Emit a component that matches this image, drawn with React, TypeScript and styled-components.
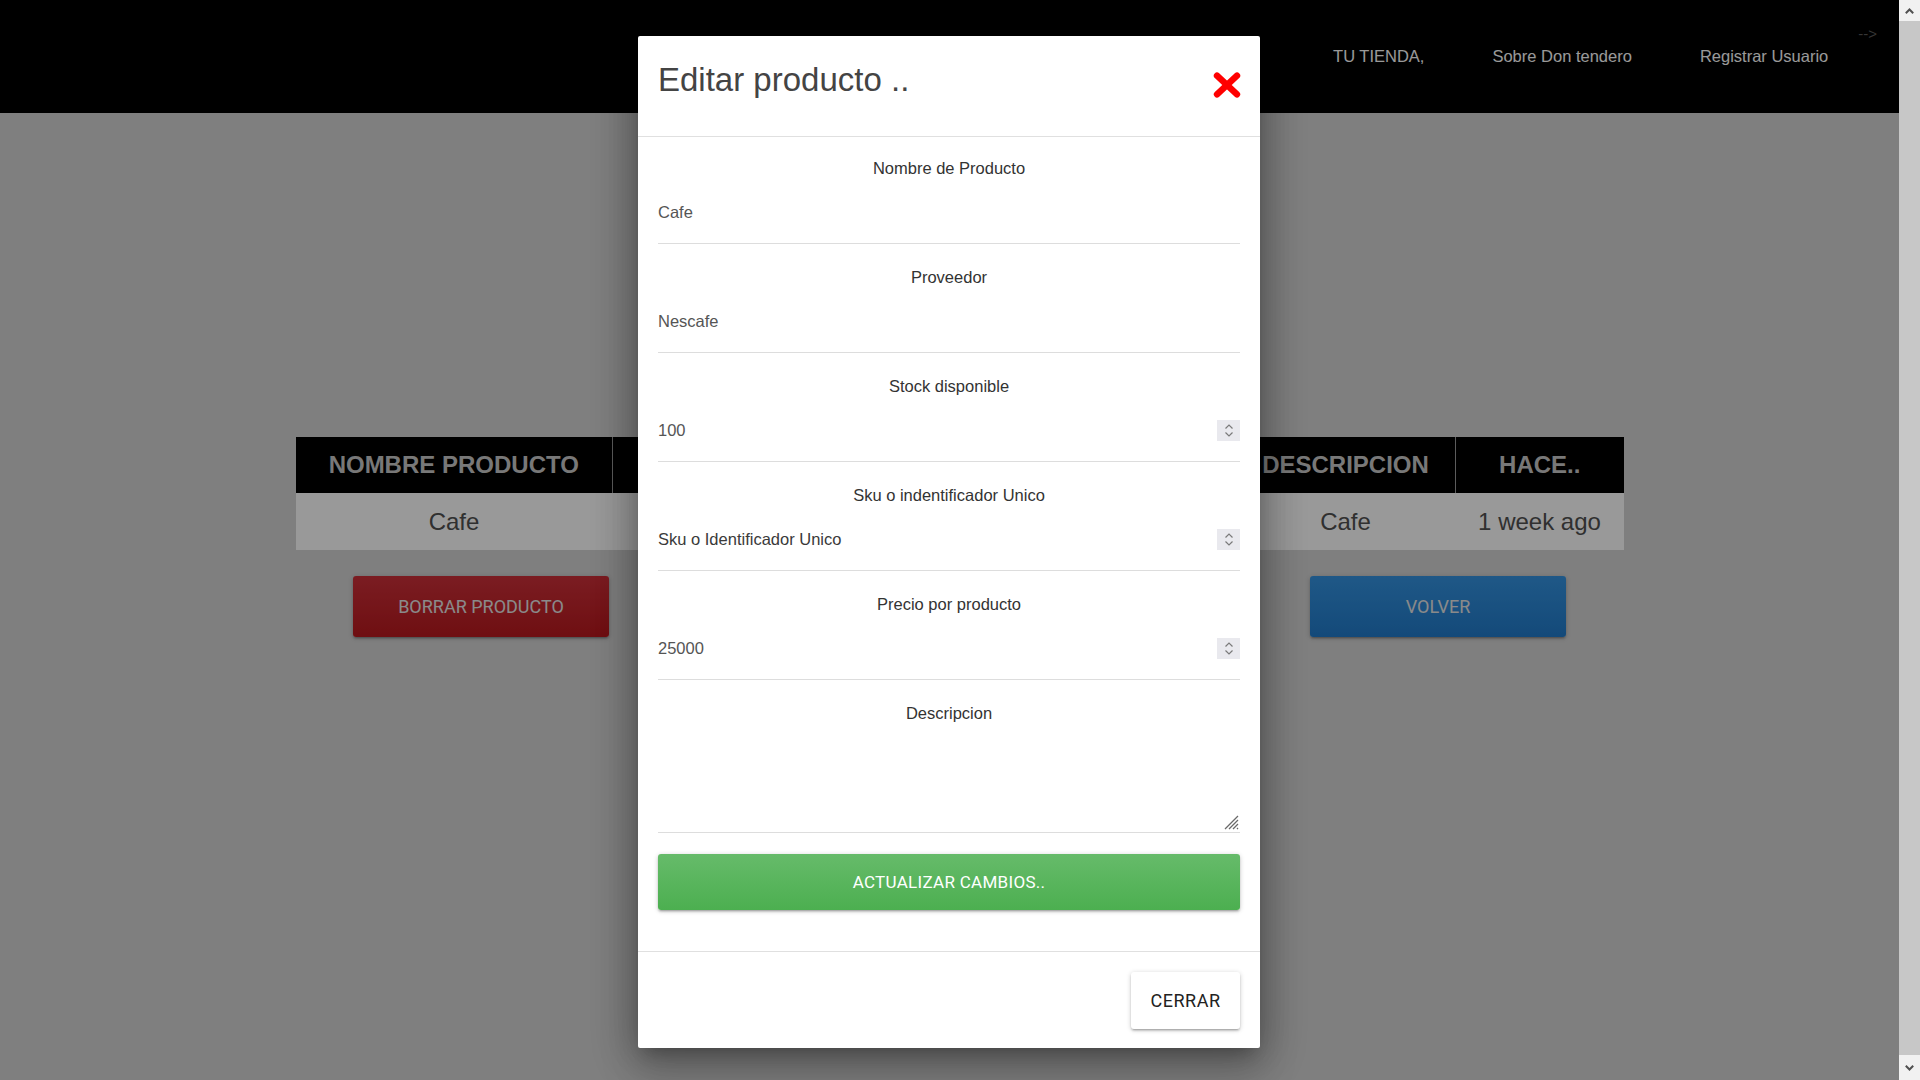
import React from "react";
import styled, { createGlobalStyle } from "styled-components";

const GlobalStyle = createGlobalStyle`
  html, body {
    margin: 0;
    padding: 0;
    height: 100%;
    overflow: hidden;
  }
  body {
    font-family: "Liberation Sans", Arial, sans-serif;
    background: #d4d4d4;
  }
  * { box-sizing: border-box; }
`;

const Screen = styled.div`
  display: flex;
  width: 100vw;
  height: 100vh;
  overflow: hidden;
`;

const Viewport = styled.div`
  position: relative;
  flex: 1;
  min-width: 0;
  height: 100%;
  overflow: hidden;
  background: #d4d4d4;
`;

/* ---------- top navigation ---------- */
const NavBar = styled.nav`
  height: 113px;
  background: #000;
  display: flex;
  justify-content: flex-end;
  align-items: center;
  padding-right: 22px;
  padding-bottom: 2px;
`;

const NavLink = styled.a`
  color: #ffffff;
  font-size: 16.5px;
  line-height: 20px;
  text-decoration: none;
  margin-left: 68px;
  &:first-child { margin-left: 0; }
`;

const StrayText = styled.span`
  align-self: flex-start;
  margin-top: 25px;
  margin-left: 30px;
  font-size: 15px;
  color: #5a5a5a;
`;

/* ---------- page content ---------- */
const Main = styled.main`
  padding: 324px 0 0 296px;
`;

const Table = styled.table`
  width: 1328px;
  border-collapse: collapse;
  table-layout: fixed;
`;

const HeadCell = styled.th<{ $last?: boolean }>`
  height: 56px;
  padding: 0;
  background: #000;
  color: #c8c8c8;
  font-size: 24px;
  font-weight: bold;
  text-align: center;
  vertical-align: middle;
  white-space: nowrap;
  overflow: hidden;
  border-right: ${(p) => (p.$last ? "none" : "1px solid #9a9a9a")};
`;

const BodyCell = styled.td`
  height: 57px;
  padding: 0;
  background: #ffffff;
  color: #505050;
  font-size: 24px;
  text-align: center;
  vertical-align: middle;
  white-space: nowrap;
  overflow: hidden;
`;

const ActionsRow = styled.div`
  width: 1328px;
  margin-top: 26px;
  padding: 0 58px 0 57px;
  display: flex;
  justify-content: space-between;
`;

const ActionButton = styled.button<{ $tone: "danger" | "info" }>`
  width: 256px;
  height: 61px;
  border: none;
  border-radius: 3px;
  font-family: Roboto, "Liberation Sans", sans-serif;
  font-size: 18px;
  text-transform: uppercase;
  color: #e6e6e6;
  background: ${(p) =>
    p.$tone === "danger"
      ? "linear-gradient(#cd3039, #b9191e)"
      : "linear-gradient(#3493e1, #217bcb)"};
  box-shadow: 0 2px 2px 0 rgba(0, 0, 0, 0.14), 0 3px 1px -2px rgba(0, 0, 0, 0.12),
    0 1px 5px 0 rgba(0, 0, 0, 0.2);
`;

/* ---------- modal ---------- */
const Overlay = styled.div`
  position: absolute;
  inset: 0;
  background: rgba(0, 0, 0, 0.4);
`;

const Modal = styled.div`
  position: absolute;
  top: 36px;
  left: 638px;
  width: 622px;
  background: #ffffff;
  border-radius: 2px;
  box-shadow: 0 24px 38px 3px rgba(0, 0, 0, 0.14), 0 9px 46px 8px rgba(0, 0, 0, 0.12),
    0 11px 15px -7px rgba(0, 0, 0, 0.2), 0 0 40px 4px rgba(0, 0, 0, 0.18);
`;

const ModalHeader = styled.div`
  height: 101px;
  padding: 24px 19px 0 20px;
  border-bottom: 1px solid #e0e0e0;
  display: flex;
  justify-content: space-between;
  align-items: flex-start;
`;

const ModalTitle = styled.h4`
  margin: 0;
  font-family: "Liberation Sans", Arial, sans-serif;
  font-weight: normal;
  font-size: 33px;
  line-height: 40px;
  color: #444444;
`;

const CloseIcon = styled.button`
  margin-top: 12px;
  padding: 0;
  border: none;
  background: transparent;
  width: 28px;
  height: 26px;
  display: flex;
  cursor: pointer;
`;

const ModalBody = styled.div`
  padding: 21px 20px 41px;
`;

const Field = styled.div<{ $last?: boolean }>`
  margin-bottom: ${(p) => (p.$last ? "0" : "23px")};
`;

const FieldLabel = styled.label`
  display: block;
  text-align: center;
  font-size: 16.5px;
  line-height: 20px;
  color: #333333;
`;

const InputRow = styled.div`
  margin-top: 4px;
  height: 62px;
  border-bottom: 1px solid #dddddd;
  display: flex;
  align-items: center;
`;

const TextInput = styled.input`
  flex: 1;
  min-width: 0;
  height: 100%;
  border: none;
  outline: none;
  padding: 0;
  background: transparent;
  font-family: "Liberation Sans", Arial, sans-serif;
  font-size: 16.5px;
  color: #555555;
  &::placeholder { color: #3a3a3a; opacity: 1; }
`;

const Spinner = styled.span`
  width: 23px;
  height: 21px;
  background: #e9e9ee;
  display: flex;
  align-items: center;
  justify-content: center;
`;

const TextAreaWrap = styled.div`
  position: relative;
  margin-top: 4px;
`;

const TextArea = styled.textarea`
  display: block;
  width: 100%;
  height: 106px;
  padding: 0;
  border: none;
  border-bottom: 1px solid #dddddd;
  outline: none;
  resize: none;
  font-family: "Liberation Sans", Arial, sans-serif;
  font-size: 16.5px;
  color: #555555;
  background: transparent;
`;

const ResizeGrip = styled.svg`
  position: absolute;
  right: 1px;
  bottom: 3px;
  pointer-events: none;
`;

const SubmitButton = styled.button`
  display: block;
  width: 100%;
  height: 56px;
  margin-top: 21px;
  border: none;
  border-radius: 3px;
  background: linear-gradient(#66bb6a, #4caf50);
  color: #ffffff;
  font-family: Roboto, "Liberation Sans", sans-serif;
  font-size: 17px;
  letter-spacing: 0.3px;
  text-transform: uppercase;
  box-shadow: 0 2px 2px 0 rgba(0, 0, 0, 0.14), 0 3px 1px -2px rgba(0, 0, 0, 0.12),
    0 1px 5px 0 rgba(0, 0, 0, 0.2);
`;

const ModalFooter = styled.div`
  border-top: 1px solid #e0e0e0;
  padding: 20px 20px 19px;
  display: flex;
  justify-content: flex-end;
`;

const FooterButton = styled.button`
  width: 109px;
  height: 57px;
  border: none;
  border-radius: 3px;
  background: #ffffff;
  color: #222222;
  font-family: Roboto, "Liberation Sans", sans-serif;
  font-size: 18px;
  letter-spacing: 0.5px;
  text-transform: uppercase;
  box-shadow: 0 2px 2px 0 rgba(0, 0, 0, 0.14), 0 3px 1px -2px rgba(0, 0, 0, 0.12),
    0 1px 5px 0 rgba(0, 0, 0, 0.2);
`;

/* ---------- scrollbar drawing ---------- */
const ScrollTrack = styled.div`
  width: 21px;
  height: 100%;
  background: #f1f1f1;
  display: flex;
  flex-direction: column;
`;

const ScrollArrow = styled.div<{ $h: number }>`
  height: ${(p) => p.$h}px;
  display: flex;
  align-items: center;
  justify-content: center;
`;

const ScrollThumb = styled.div`
  flex: 1;
  background: #c7c7c7;
`;

const Chevron = ({ dir }: { dir: "up" | "down" }) => (
  <svg width="9" height="6" viewBox="0 0 9 6">
    <path
      d={dir === "up" ? "M0.8 5.2 L4.5 1.5 L8.2 5.2" : "M0.8 0.8 L4.5 4.5 L8.2 0.8"}
      fill="none"
      stroke="#505050"
      strokeWidth="2"
    />
  </svg>
);

const SpinIcon = () => (
  <svg width="10" height="15" viewBox="0 0 10 15">
    <path
      d="M1.5 5.5 L5 2 L8.5 5.5 M1.5 9.5 L5 13 L8.5 9.5"
      fill="none"
      stroke="#7a7a7a"
      strokeWidth="1.2"
    />
  </svg>
);

const NumberField = ({ label, value, placeholder }: { label: string; value?: string; placeholder?: string }) => (
  <Field>
    <FieldLabel>{label}</FieldLabel>
    <InputRow>
      <TextInput defaultValue={value} placeholder={placeholder} />
      <Spinner>
        <SpinIcon />
      </Spinner>
    </InputRow>
  </Field>
);

const TextField = ({ label, value }: { label: string; value: string }) => (
  <Field>
    <FieldLabel>{label}</FieldLabel>
    <InputRow>
      <TextInput defaultValue={value} />
    </InputRow>
  </Field>
);

const columns = [
  { head: "NOMBRE PRODUCTO", cell: "Cafe", width: 316 },
  { head: "PROVEEDOR", cell: "Nescafe", width: 208 },
  { head: "STOCK", cell: "100", width: 208 },
  { head: "PRECIO", cell: "25000", width: 208 },
  { head: "DESCRIPCION", cell: "Cafe", width: 219 },
  { head: "HACE..", cell: "1 week ago", width: 169 },
];

export default function App() {
  return (
    <>
      <GlobalStyle />
      <Screen>
        <Viewport>
          <NavBar>
            <NavLink href="#">TU TIENDA,</NavLink>
            <NavLink href="#">Sobre Don tendero</NavLink>
            <NavLink href="#">Registrar Usuario</NavLink>
            <StrayText>--&gt;</StrayText>
          </NavBar>

          <Main>
            <Table>
              <colgroup>
                {columns.map((c) => (
                  <col key={c.head} style={{ width: c.width }} />
                ))}
              </colgroup>
              <thead>
                <tr>
                  {columns.map((c, i) => (
                    <HeadCell key={c.head} $last={i === columns.length - 1}>
                      {c.head}
                    </HeadCell>
                  ))}
                </tr>
              </thead>
              <tbody>
                <tr>
                  {columns.map((c) => (
                    <BodyCell key={c.head}>{c.cell}</BodyCell>
                  ))}
                </tr>
              </tbody>
            </Table>
            <ActionsRow>
              <ActionButton $tone="danger">Borrar producto</ActionButton>
              <ActionButton $tone="info">Volver</ActionButton>
            </ActionsRow>
          </Main>

          <Overlay />

          <Modal>
            <ModalHeader>
              <ModalTitle>Editar producto ..</ModalTitle>
              <CloseIcon aria-label="close">
                <svg width="28" height="26" viewBox="0 0 28 26">
                  <path
                    d="M4 3.6 L24 22.4 M24 3.6 L4 22.4"
                    stroke="#ff0000"
                    strokeWidth="6.4"
                    strokeLinecap="round"
                  />
                </svg>
              </CloseIcon>
            </ModalHeader>

            <ModalBody>
              <TextField label="Nombre de Producto" value="Cafe" />
              <TextField label="Proveedor" value="Nescafe" />
              <NumberField label="Stock disponible" value="100" />
              <NumberField label="Sku o indentificador Unico" placeholder="Sku o Identificador Unico" />
              <NumberField label="Precio por producto" value="25000" />
              <Field $last>
                <FieldLabel>Descripcion</FieldLabel>
                <TextAreaWrap>
                  <TextArea />
                  <ResizeGrip width="17" height="17" viewBox="0 0 17 17">
                    <path
                      d="M16 3 L3 16 M16 7 L7 16 M16 11 L11 16 M16 15 L15 16"
                      stroke="#6a6a6a"
                      strokeWidth="1.3"
                      fill="none"
                    />
                  </ResizeGrip>
                </TextAreaWrap>
              </Field>
              <SubmitButton>Actualizar cambios..</SubmitButton>
            </ModalBody>

            <ModalFooter>
              <FooterButton>Cerrar</FooterButton>
            </ModalFooter>
          </Modal>
        </Viewport>

        <ScrollTrack>
          <ScrollArrow $h={21}>
            <Chevron dir="up" />
          </ScrollArrow>
          <ScrollThumb />
          <ScrollArrow $h={25}>
            <Chevron dir="down" />
          </ScrollArrow>
        </ScrollTrack>
      </Screen>
    </>
  );
}
